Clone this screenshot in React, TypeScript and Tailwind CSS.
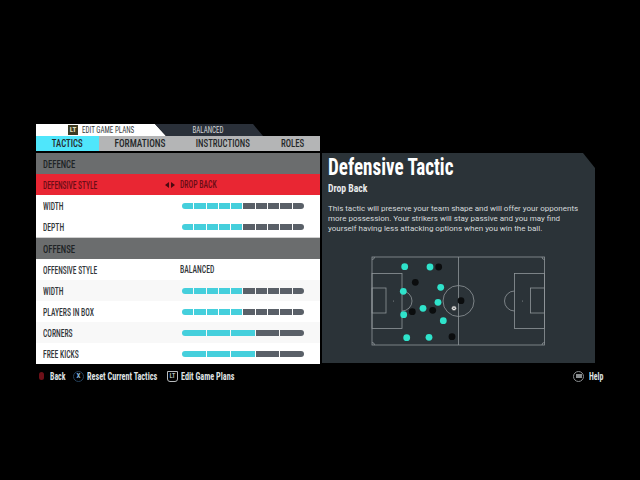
import type { ReactNode } from "react";

const sans = "font-['Roboto_Condensed','Roboto',sans-serif]";

// the condensed family is still wider than the picture's labels, so squeeze them a bit more
function Squeeze({ children, className }: { children: ReactNode; className: string }) {
  return <span className={`inline-block whitespace-nowrap ${className}`}>{children}</span>;
}

function Bar({ filled, total }: { filled: number; total: number }) {
  return (
    <div className="flex w-[122px] h-[6px] gap-px rounded-full overflow-hidden">
      {Array.from({ length: total }).map((_, i) => (
        <div key={i} className={i < filled ? "flex-1 bg-[#45cfdc]" : "flex-1 bg-[#5a6068]"} />
      ))}
    </div>
  );
}

function SectionHeader({ label }: { label: string }) {
  return (
    <div className="h-[21px] bg-[#6b6d6e] flex items-center pl-[7px] pt-[3px] text-[11px] font-medium text-[#202426]">
      <Squeeze className="origin-left scale-x-[0.79]">{label}</Squeeze>
    </div>
  );
}

function SliderRow({ label, filled, total, shade }: { label: string; filled: number; total: number; shade?: boolean }) {
  return (
    <div className={shade ? "h-[21px] bg-[#f8f8f8] flex items-center" : "h-[21px] bg-white flex items-center"}>
      <div className="w-[146px] pl-[7px] pt-px text-[10px] font-medium text-[#33373a]">
        <Squeeze className="origin-left scale-x-[0.76]">{label}</Squeeze>
      </div>
      <Bar filled={filled} total={total} />
    </div>
  );
}

function Tabs() {
  return (
    <div className="flex h-[15px] bg-[#b4b5b6] text-[11px] font-medium text-[#26292b] items-center">
      <div className="w-[63px] h-full bg-[#4fe6fb] flex items-center justify-center pt-px">
        <Squeeze className="scale-x-[0.8]">TACTICS</Squeeze>
      </div>
      <div className="w-[83px] text-center pt-px">
        <Squeeze className="scale-x-[0.85]">FORMATIONS</Squeeze>
      </div>
      <div className="w-[84px] text-center -ml-px pt-px">
        <Squeeze className="scale-x-[0.8]">INSTRUCTIONS</Squeeze>
      </div>
      <div className="w-[55px] text-center pt-px">
        <Squeeze className="scale-x-[0.8]">ROLES</Squeeze>
      </div>
    </div>
  );
}

function TopTabs() {
  return (
    <div className="flex h-[12px] text-[9px]">
      <div className="w-[130px] bg-white text-[#33373a] flex items-center pl-[32px] [clip-path:polygon(0_0,119px_0,100%_100%,0_100%)]">
        <span className="w-[10px] h-[10px] bg-[#3c3a22] text-[#e5e2c0] text-[7px] leading-[10px] text-center font-bold">LT</span>
        <Squeeze className="ml-[4px] pt-px origin-left scale-x-[0.78]">EDIT GAME PLANS</Squeeze>
      </div>
      <div className="w-[108px] -ml-[11px] bg-[#2a3039] text-[#d4d7da] flex items-center justify-center pt-px pr-[2px] [clip-path:polygon(0_0,calc(100%-10px)_0,100%_100%,11px_100%)]">
        <Squeeze className="scale-x-[0.78]">BALANCED</Squeeze>
      </div>
    </div>
  );
}

function LeftPanel() {
  return (
    <div className={`w-[284px] ${sans}`}>
      <TopTabs />
      <Tabs />
      <div className="h-[2px]" />
      <SectionHeader label="DEFENCE" />
      <div className="h-[21px] bg-[#e92633] flex items-center text-[10px] font-medium text-[#6a0d16]">
        <div className="w-[129px] pl-[7px] pt-px">
          <Squeeze className="origin-left scale-x-[0.74]">DEFENSIVE STYLE</Squeeze>
        </div>
        <svg width="10" height="6" viewBox="0 0 10 6" className="mr-[5px]">
          <path d="M4 0v6L0 3zM6 0v6l4-3z" fill="#4a0a10" />
        </svg>
        <div className="text-[11px] pt-px">
          <Squeeze className="origin-left scale-x-[0.7]">DROP BACK</Squeeze>
        </div>
      </div>
      <SliderRow label="WIDTH" filled={5} total={10} />
      <SliderRow label="DEPTH" filled={5} total={10} />
      <div className="h-px bg-[#cfcfcf]" />
      <SectionHeader label="OFFENSE" />
      <div className="h-[21px] bg-white flex items-center pt-px font-medium">
        <div className="w-[144px] pl-[7px] text-[10px] text-[#33373a]">
          <Squeeze className="origin-left scale-x-[0.74]">OFFENSIVE STYLE</Squeeze>
        </div>
        <div className="text-[11px] text-[#33373a]">
          <Squeeze className="origin-left scale-x-[0.7]">BALANCED</Squeeze>
        </div>
      </div>
      <SliderRow label="WIDTH" filled={5} total={10} shade />
      <SliderRow label="PLAYERS IN BOX" filled={5} total={10} />
      <SliderRow label="CORNERS" filled={3} total={5} shade />
      <SliderRow label="FREE KICKS" filled={3} total={5} />
    </div>
  );
}

const cyanDots = [
  [39.7, 17.7], [65, 18], [38.3, 42.3], [75.7, 38.3], [73, 53.3],
  [58, 59.3], [38.7, 65.7], [78.3, 71.7], [41.7, 88.7], [64, 88.3],
];
const blackDots = [[73.7, 18], [50.3, 33.3], [96, 51.7], [47.3, 62.7], [67.7, 61.3], [87, 87.7]];

function Pitch() {
  return (
    <svg width="185" height="105" viewBox="0 0 185 105" fill="none" stroke="#8f9699" strokeWidth="0.8">
      <rect x="7" y="8" width="172.5" height="88" />
      <path d="M93.5 8v88" />
      <circle cx="93.5" cy="52" r="15.5" />
      <rect x="7" y="24.5" width="30" height="55" />
      <rect x="7" y="39" width="14" height="25" />
      <path d="M37 42a10 10 0 0 1 0 20" />
      <rect x="149.5" y="24.5" width="30" height="55" />
      <rect x="165.5" y="39" width="14" height="25" />
      <path d="M149.5 42a10 10 0 0 0 0 20" />
      <path d="M7 10.5a2.500 2.500 0 0 0 2.500-2.500M177 8a2.500 2.500 0 0 0 2.500 2.500M7 93.500a2.500 2.500 0 0 1 2.500 2.500M177 96a2.500 2.500 0 0 1 2.500-2.500" />
      {cyanDots.map(([x, y], i) => (
        <circle key={i} cx={x} cy={y} r="3.400" fill="#2fe3cb" stroke="none" />
      ))}
      {blackDots.map(([x, y], i) => (
        <circle key={i} cx={x} cy={y} r="3.400" fill="#0b0d0e" stroke="none" />
      ))}
      <circle cx="89" cy="59.300" r="2.300" fill="#eef0f0" stroke="#555" strokeWidth="0.6" />
      <circle cx="89" cy="59.300" r="0.800" fill="#333" stroke="none" />
      <circle cx="28.500" cy="52" r="0.500" fill="#8f9699" stroke="none" />
      <circle cx="157.500" cy="52" r="0.500" fill="#8f9699" stroke="none" />
    </svg>
  );
}

function InfoPanel() {
  return (
    <div className="w-[273px] h-[210px] ml-[2px] mt-[29px] bg-[#2b3338] pl-[6px] [clip-path:polygon(0_0,calc(100%-12px)_0,100%_15px,100%_100%,0_100%)]">
      <div className={`${sans} text-[23px] leading-[26px] font-bold text-white pt-[2px]`}>
        <Squeeze className="origin-left scale-x-[0.83]">Defensive Tactic</Squeeze>
      </div>
      <div className={`${sans} text-[11px] leading-[14px] mt-px font-bold text-[#e8eaeb]`}>
        <Squeeze className="origin-left scale-x-[0.88]">Drop Back</Squeeze>
      </div>
      <div className="font-['Roboto',sans-serif] text-[8px] leading-[10px] text-[#d5d9db] mt-[8px] whitespace-nowrap">
        <div>This tactic will preserve your team shape and will offer your opponents</div>
        <div>more possession. Your strikers will stay passive and you may find</div>
        <div>yourself having less attacking options when you win the ball.</div>
      </div>
      <div className="ml-[37px] mt-[15px]">
        <Pitch />
      </div>
    </div>
  );
}

function Footer() {
  return (
    <div className={`flex items-center h-[20px] mt-[2px] ml-[36px] text-[10px] font-bold text-[#dfe2e3] ${sans}`}>
      <span className="w-[5px] h-[8px] ml-[3px] rounded-full bg-[#6e1018]" />
      <span className="ml-[6px] w-[15px]">
        <Squeeze className="origin-left scale-x-[0.78]">Back</Squeeze>
      </span>
      <span className="ml-[8px] w-[11px] h-[11px] rounded-full border border-[#26425c] text-[7px] text-[#8fb8dc] flex items-center justify-center">X</span>
      <span className="ml-[3px] w-[70px]">
        <Squeeze className="origin-left scale-x-[0.82]">Reset Current Tactics</Squeeze>
      </span>
      <span className="ml-[10px] w-[11px] h-[11px] border border-[#b8bcbe] rounded-b-[3px] text-[7px] font-normal flex items-center justify-center">LT</span>
      <span className="ml-[3px] w-[53px]">
        <Squeeze className="origin-left scale-x-[0.82]">Edit Game Plans</Squeeze>
      </span>
      <span className="ml-auto w-[11px] h-[11px] rounded-full border border-[#8a8e90] flex items-center justify-center">
        <span className="w-[6px] h-[4px] bg-[#8a8e90]" />
      </span>
      <span className="ml-[5px] mr-[37px] w-[14px]">
        <Squeeze className="origin-left scale-x-[0.78]">Help</Squeeze>
      </span>
    </div>
  );
}

export default function App() {
  return (
    <div className="w-[640px] h-[480px] bg-black overflow-hidden pt-[124px]">
      <div className="flex pl-[36px]">
        <LeftPanel />
        <InfoPanel />
      </div>
      <Footer />
    </div>
  );
}
